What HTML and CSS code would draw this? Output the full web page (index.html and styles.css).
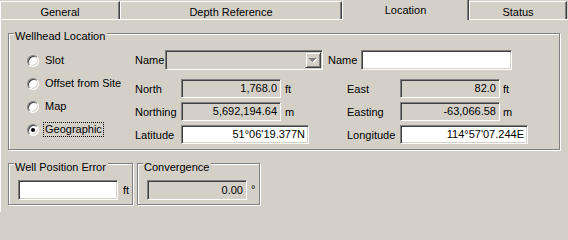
FILE: index.html
```html
<!DOCTYPE html>
<html>
<head>
<meta charset="utf-8">
<title>Location</title>
<link rel="stylesheet" href="styles.css">
</head>
<body>
<div class="window">
  <div class="tabs">
    <div class="tab tab-general">General</div>
    <div class="tab tab-depth">Depth Reference</div>
    <div class="tab tab-location active">Location</div>
    <div class="tab tab-status">Status</div>
  </div>
  <div class="panel">
    <div class="group wellhead">
      <span class="caption">Wellhead Location</span>
      <div class="radios">
        <div class="radio-row"><span class="radio"></span><span class="rlabel">Slot</span></div>
        <div class="radio-row"><span class="radio"></span><span class="rlabel">Offset from Site</span></div>
        <div class="radio-row"><span class="radio"></span><span class="rlabel">Map</span></div>
        <div class="radio-row"><span class="radio checked"></span><span class="rlabel focus">Geographic</span></div>
      </div>
      <div class="fields">
        <div class="name-row">
          <span class="lbl name-lbl">Name</span>
          <div class="edit ro combo">
            <div class="combo-btn">
              <svg width="14" height="14" viewBox="0 0 14 14" shape-rendering="crispEdges">
                <g fill="#fff">
                  <rect x="4" y="6" width="7" height="1"/>
                  <rect x="5" y="7" width="5" height="1"/>
                  <rect x="6" y="8" width="3" height="1"/>
                  <rect x="7" y="9" width="1" height="1"/>
                </g>
                <g fill="#808080">
                  <rect x="3" y="5" width="7" height="1"/>
                  <rect x="4" y="6" width="5" height="1"/>
                  <rect x="5" y="7" width="3" height="1"/>
                  <rect x="6" y="8" width="1" height="1"/>
                </g>
              </svg>
            </div>
          </div>
          <span class="lbl name-lbl2">Name</span>
          <div class="edit name-edit"></div>
        </div>
        <div class="row first">
          <span class="lbl l1">North</span>
          <div class="cell2"><div class="edit ro w100">1,768.0</div><span class="unit">ft</span></div>
          <span class="lbl l2">East</span>
          <div class="edit ro w100">82.0</div><span class="unit u2">ft</span>
        </div>
        <div class="row">
          <span class="lbl l1">Northing</span>
          <div class="cell2"><div class="edit ro w100">5,692,194.64</div><span class="unit">m</span></div>
          <span class="lbl l2">Easting</span>
          <div class="edit ro w100">-63,066.58</div><span class="unit u2">m</span>
        </div>
        <div class="row">
          <span class="lbl l1">Latitude</span>
          <div class="cell2"><div class="edit w128">51°06'19.377N</div></div>
          <span class="lbl l2">Longitude</span>
          <div class="edit w128">114°57'07.244E</div>
        </div>
      </div>
    </div>
    <div class="bottom">
      <div class="group small wpe">
        <span class="caption">Well Position Error</span>
        <div class="edit w100 h20"></div><span class="unit bunit">ft</span>
      </div>
      <div class="group small conv">
        <span class="caption">Convergence</span>
        <div class="edit ro w100 h20">0.00</div><span class="unit deg">°</span>
      </div>
    </div>
  </div>
</div>
</body>
</html>
```

FILE: styles.css
```css
* { box-sizing: border-box; }
html, body { margin: 0; padding: 0; }
body {
  width: 568px;
  height: 212px;
  overflow: hidden;
  background: #d4d0c8;
  font-family: "Liberation Sans", Arial, sans-serif;
  font-size: 11px;
  line-height: 13px;
  color: #000;
}
.window { width: 568px; height: 212px; }

/* tabs */
.tabs { display: flex; align-items: flex-start; height: 19px; }
.tab {
  margin-top: 1px;
  height: 18px;
  padding-top: 4px;
  text-align: center;
  white-space: nowrap;
  background: #d4d0c8;
  border-top: 1px solid #fff;
  border-left: 1px solid #fff;
  border-right: 1px solid #404040;
  box-shadow: inset -1px 0 0 #808080;
}
.tab-general { width: 120px; }
.tab-depth { width: 222px; }
.tab-location { width: 127px; }
.tab-status { width: 98px; }
.tab.active {
  margin-top: 0;
  height: 20px;
  padding-top: 4px;
  border-top: none;
  position: relative;
  z-index: 1;
}

/* panel */
.panel {
  height: 193px;
  border-top: 1px solid #fff;
  border-left: 1px solid #fff;
  padding: 13px 0 0 7px;
}

/* group boxes */
.group {
  position: relative;
  border: 1px solid #808080;
  box-shadow: inset 1px 1px 0 #fff, 1px 1px 0 #fff;
}
.caption {
  position: absolute;
  top: -4px;
  left: 5px;
  padding: 0 2px 0 1px;
  background: #d4d0c8;
  white-space: nowrap;
}
.wellhead {
  width: 552px;
  height: 117px;
  display: flex;
  padding: 15px 0 0 18px;
}

/* radios */
.radios { width: 108px; display: flex; flex-direction: column; }
.radio-row { height: 23px; display: flex; align-items: center; }
.radio {
  position: relative;
  width: 12px;
  height: 12px;
  margin-right: 5px;
  border-radius: 50%;
  background: #fff;
  border: 1px solid;
  border-color: #808080 #fff #fff #808080;
  box-shadow: inset 1px 1px 0 #404040, inset -1px -1px 0 #d4d0c8;
}
.radio.checked::after {
  content: "";
  position: absolute;
  left: 3px;
  top: 3px;
  width: 4px;
  height: 4px;
  border-radius: 50%;
  background: #000;
}
.rlabel { padding: 0 1px; white-space: nowrap; }
.rlabel.focus { outline: 1px dotted #000; }

/* fields */
.fields { display: flex; flex-direction: column; }
.name-row { margin-top: 1px; height: 20px; display: flex; align-items: center; }
.lbl { white-space: nowrap; }
.name-lbl { width: 30px; }
.name-lbl2 { width: 33px; margin-left: 5px; padding-top: 1px; }
.edit {
  height: 19px;
  border: 1px solid;
  border-color: #808080 #fff #fff #808080;
  box-shadow: inset 1px 1px 0 #404040, inset -1px -1px 0 #d4d0c8;
  background: #fff;
  text-align: right;
  padding-right: 3px;
  line-height: 17px;
  white-space: nowrap;
}
.edit.ro { background: #d4d0c8; }
.combo {
  width: 158px;
  height: 20px;
  display: flex;
  justify-content: flex-end;
  padding: 1px;
}
.combo-btn {
  width: 16px;
  height: 16px;
  background: #d4d0c8;
  border: 1px solid;
  border-color: #d4d0c8 #404040 #404040 #d4d0c8;
  box-shadow: inset 1px 1px 0 #fff, inset -1px -1px 0 #808080;
}
.combo-btn svg { display: block; }
.name-edit { width: 151px; height: 20px; }

.row { height: 19px; margin-top: 4px; display: flex; align-items: center; }
.row.first { margin-top: 9px; }
.l1 { width: 46px; padding-top: 2px; }
.cell2 { width: 166px; display: flex; align-items: center; }
.l2 { width: 53px; padding-top: 2px; }
.w100 { width: 100px; }
.w128 { width: 128px; }
.h20 { height: 20px; line-height: 18px; }
.unit { margin-left: 4px; padding-top: 1px; }
.unit.u2 { margin-left: 3px; }

/* bottom */
.bottom { display: flex; gap: 4px; margin-top: 13px; }
.small {
  height: 42px;
  display: flex;
  align-items: flex-start;
  padding: 16px 0 0 9px;
}
.small .caption { top: -3px; }
.wpe { width: 125px; }
.conv { width: 123px; }
.bunit { margin-left: 5px; padding-top: 4px; }
.deg { margin-left: 4px; padding-top: 3px; }
```
